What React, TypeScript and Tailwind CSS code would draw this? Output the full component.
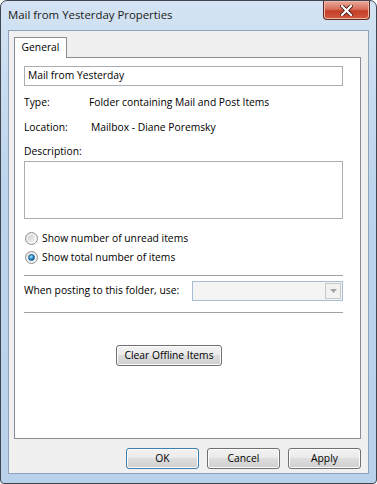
const font = 'font-["Open_Sans","Noto_Sans",sans-serif]'

function Radio({ checked, label }: { checked?: boolean; label: string }) {
  return (
    <div className="flex h-[19px] items-center">
      <span className="relative ml-[1px] flex h-[13px] w-[13px] items-center justify-center rounded-full border border-[#8e8f8f] bg-gradient-to-br from-[#e6e6e6] to-[#fbfbfb]">
        {checked ? (
          <span className="h-[7px] w-[7px] rounded-full border border-[#1a5a8a] bg-[radial-gradient(circle_at_40%_35%,#9fe2ff,#1f7ec0_60%,#0f4f86)]" />
        ) : (
          <span className="h-[7px] w-[7px] rounded-full bg-gradient-to-br from-[#cfcfcf] to-[#f2f2f2]" />
        )}
      </span>
      <span className="ml-[4px]">{label}</span>
    </div>
  )
}

function Button({ label, primary, className = '' }: { label: string; primary?: boolean; className?: string }) {
  return (
    <button
      className={`flex items-center justify-center rounded-[3px] border ${
        primary ? 'border-[#3c7fb1]' : 'border-[#707070]'
      } bg-[linear-gradient(#f2f2f2_0%,#ebebeb_45%,#dddddd_50%,#cfcfcf_100%)] text-[10.3px] text-black shadow-[inset_0_0_0_1px_#fcfcfc] ${className}`}
    >
      {label}
    </button>
  )
}

export default function App() {
  return (
    <div className={`${font} h-[484px] w-[377px] bg-white text-[10.3px] text-black`}>
      <div className="flex h-[484px] w-[377px] flex-col rounded-t-[7px] rounded-b-[4px] border border-[#404650] bg-[linear-gradient(#d3e3f3,#bcd4ec_40%,#b9d1ea)] px-[7px] pb-[9px]">
        <div className="flex h-[29px] items-start">
          <div className="mt-[6px] text-[11.4px] leading-[16px] text-[#1a1a1a]">Mail from Yesterday Properties</div>
          <div className="ml-auto mr-[-1px] flex h-[19px] w-[47px] items-center justify-center rounded-b-[4px] border border-t-0 border-[#5c2b24] bg-[linear-gradient(#e9a99b,#d9705d_45%,#c23f28_55%,#d3593f)] shadow-[inset_0_0_0_1px_#f0b6a8]">
            <svg width="13" height="11" viewBox="0 0 13 11">
              <path d="M2 1 L11 10 M11 1 L2 10" stroke="#4a1a14" strokeWidth="4" strokeLinecap="square" />
              <path d="M2 1 L11 10 M11 1 L2 10" stroke="#ffffff" strokeWidth="2.2" strokeLinecap="square" />
            </svg>
          </div>
        </div>

        <div className="flex flex-1 flex-col border border-[#8da3bb] bg-[#f0f0f0] pl-[5px] pr-[7px] pt-[6px]">
          <div className="flex">
            <div className="relative z-10 -mb-px flex h-[21px] w-[53px] items-center justify-center border border-b-0 border-[#898c95] bg-white">
              General
            </div>
          </div>
          <div className="flex h-[382px] flex-col border border-[#898c95] bg-white pl-[9px] pr-[17px] pt-[8px]">
            <div className="flex h-[20px] items-center border border-[#abadb3] px-[3px]">Mail from Yesterday</div>

            <div className="mt-[9px] flex h-[16px] items-center">
              <span className="w-[65px]">Type:</span>
              <span>Folder containing Mail and Post Items</span>
            </div>
            <div className="mt-[9px] flex h-[16px] items-center">
              <span className="w-[67px]">Location:</span>
              <span>Mailbox - Diane Poremsky</span>
            </div>
            <div className="mt-[8px] flex h-[16px] items-center">Description:</div>
            <div className="mt-[1px] h-[58px] border border-[#abadb3]" />

            <div className="mt-[10px]">
              <Radio label="Show number of unread items" />
              <Radio checked label="Show total number of items" />
            </div>

            <div className="mt-[8px] h-px bg-[#a0a0a0]" />
            <div className="mt-[5px] flex h-[20px] items-center">
              <span className="whitespace-nowrap">When posting to this folder, use:</span>
              <div className="ml-auto flex h-[20px] w-[151px] border border-[#a7bed6] bg-[#f4f4f4]">
                <div className="flex-1" />
                <div className="my-[1px] mr-[1px] flex w-[16px] items-center justify-center border border-[#c9c9c9] bg-[#f2f2f2]">
                  <svg width="7" height="4" viewBox="0 0 7 4">
                    <path d="M0 0 H7 L3.5 4 Z" fill="#a3a3a3" />
                  </svg>
                </div>
              </div>
            </div>
            <div className="mt-[11px] h-px bg-[#a0a0a0]" />

            <div className="mt-[32px] flex">
              <Button label="Clear Offline Items" className="ml-[92px] h-[21px] w-[106px] whitespace-nowrap" />
            </div>
          </div>

          <div className="mt-[9px] flex justify-end gap-[8px]">
            <Button primary label="OK" className="h-[21px] w-[73px]" />
            <Button label="Cancel" className="h-[21px] w-[73px]" />
            <Button label="Apply" className="h-[21px] w-[73px]" />
          </div>
        </div>
      </div>
    </div>
  )
}
